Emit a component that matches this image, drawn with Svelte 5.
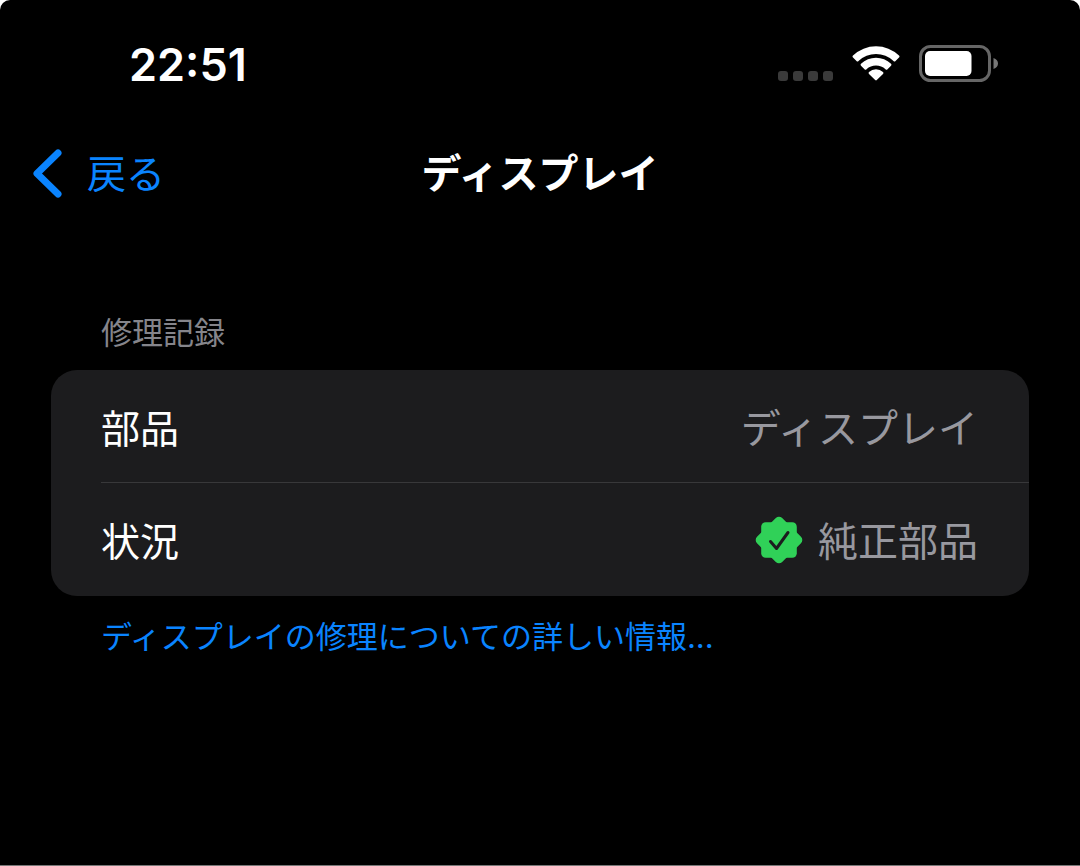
<script lang="ts">
  let time = "22:51";
  let batteryLevel = 0.75;

  const title = "ディスプレイ";
</script>

<div class="screen">
  <div class="status-bar">
    <time class="clock">{time}</time>
    <div class="indicators">
      <svg class="signal" width="56" height="10" viewBox="0 0 56 10" aria-hidden="true">
        {#each [0, 15, 30, 45] as x}
          <rect {x} width="10" height="10" rx="3" fill="#3a3a3a" />
        {/each}
      </svg>
      <svg class="wifi" width="48" height="36" viewBox="0 0 48 36" aria-hidden="true">
        <path d="M1 10.500a33.500 33.500 0 0 1 46 0q1 1 0 2l-3.500 3.500q-1 1-2 0a25.500 25.500 0 0 0-35 0q-1 1-2 0l-3.500-3.500q-1-1 0-2z" fill="#fff" />
        <path d="M9 18.800a21.800 21.800 0 0 1 30 0q1 1 0 2l-3.500 3.500q-1 1-2 0a14 14 0 0 0-19 0q-1 1-2 0l-3.500-3.500q-1-1 0-2z" fill="#fff" />
        <path d="M17 27a10.500 10.500 0 0 1 14 0q1 1 0 2l-6.200 6q-.8.8-1.600 0l-6.200-6q-1-1 0-2z" fill="#fff" />
      </svg>
      <svg class="battery" width="79" height="37" viewBox="0 0 79 37" aria-hidden="true">
        <rect x="1.5" y="1.5" width="69" height="34" rx="10" fill="none" stroke="#666" stroke-width="3" />
        <rect x="6" y="6" width={62 * batteryLevel} height="25" rx="5" fill="#fff" />
        <path d="M74.5 13c3 1 4.500 3 4.500 5.500s-1.500 4.500-4.500 5.500z" fill="#777" />
      </svg>
    </div>
  </div>

  <header class="nav">
    <button class="back" type="button">
      <svg width="30" height="50" viewBox="0 0 30 50" aria-hidden="true">
        <path d="M26 5L5 25.500L26 46" fill="none" stroke="currentColor" stroke-width="7" stroke-linecap="round" stroke-linejoin="round" />
      </svg>
      <span>戻る</span>
    </button>
    <h1>{title}</h1>
  </header>

  <main>
    <h2>修理記録</h2>
    <dl class="card">
      <div class="row">
        <dt>部品</dt>
        <dd>ディスプレイ</dd>
      </div>
      <div class="row">
        <dt>状況</dt>
        <dd>
          <svg class="badge" width="48" height="48" viewBox="0 0 48 48" aria-hidden="true">
            <g fill="#30d158">
              <rect x="6.200" y="6.200" width="35.600" height="35.600" rx="4.500" />
              <rect x="6.200" y="6.200" width="35.600" height="35.600" rx="4.500" transform="rotate(45 24 24)" />
            </g>
            <path d="M15.500 25.500L21.500 32.500L33 16.500" fill="none" stroke="#1c1c1e" stroke-width="3" stroke-linecap="round" stroke-linejoin="round" />
          </svg>
          <span>純正部品</span>
        </dd>
      </div>
    </dl>
    <a href="#repair">ディスプレイの修理についての詳しい情報<span class="dots">...</span></a>
  </main>
</div>

<style>
  :global(body) {
    margin: 0;
    background: #fff;
  }

  .screen {
    box-sizing: border-box;
    min-height: 100vh;
    background: #000;
    border-bottom: 1px solid #777;
    border-radius: 10px 10px 0 0;
    color: #fff;
    font-family: "Noto Sans CJK JP", sans-serif;
    font-size: 39px;
  }

  .status-bar {
    display: flex;
    justify-content: space-between;
    align-items: center;
    height: 126px;
    padding: 0 82px 0 129px;
  }

  .clock {
    padding-top: 4px;
    font-family: Inter, sans-serif;
    font-size: 45px;
    font-weight: 600;
    line-height: 56px;
  }

  .indicators {
    display: flex;
    align-items: flex-end;
  }

  .signal,
  .wifi {
    margin-bottom: 1px;
  }

  .wifi {
    margin-left: 18px;
    margin-right: 19px;
  }

  .nav {
    display: grid;
    grid-template-columns: 1fr auto 1fr;
    align-items: center;
    height: 94px;
    padding: 0 32px;
  }

  .back {
    display: flex;
    align-items: center;
    gap: 25px;
    padding: 0;
    border: none;
    background: none;
    color: #0a84ff;
    font: inherit;
    line-height: 56px;
    cursor: pointer;
  }

  .back span,
  h1 {
    padding-bottom: 4px;
  }

  h1 {
    margin: 0;
    font-size: 40px;
    font-weight: 600;
    line-height: 56px;
  }

  main {
    padding: 88px 51px 0;
  }

  h2 {
    margin: 0;
    padding: 0 50px;
    color: #85858b;
    font-size: 31px;
    font-weight: 400;
    line-height: 46px;
  }

  .card {
    margin: 16px 0;
    border-radius: 26px;
    background: #1c1c1e;
  }

  .row {
    display: flex;
    justify-content: space-between;
    align-items: center;
    margin-left: 50px;
    padding-right: 51px;
    line-height: 113px;
  }

  .row + .row {
    box-shadow: 0 -1px #38383a;
  }

  dd {
    display: flex;
    align-items: center;
    gap: 15px;
    margin: 0;
    color: #98989f;
    font-size: 40px;
  }

  a {
    display: block;
    padding: 0 50px;
    color: #0a84ff;
    font-size: 31px;
    line-height: 46px;
    text-decoration: none;
  }

  .dots {
    font-family: Inter, sans-serif;
  }
</style>
